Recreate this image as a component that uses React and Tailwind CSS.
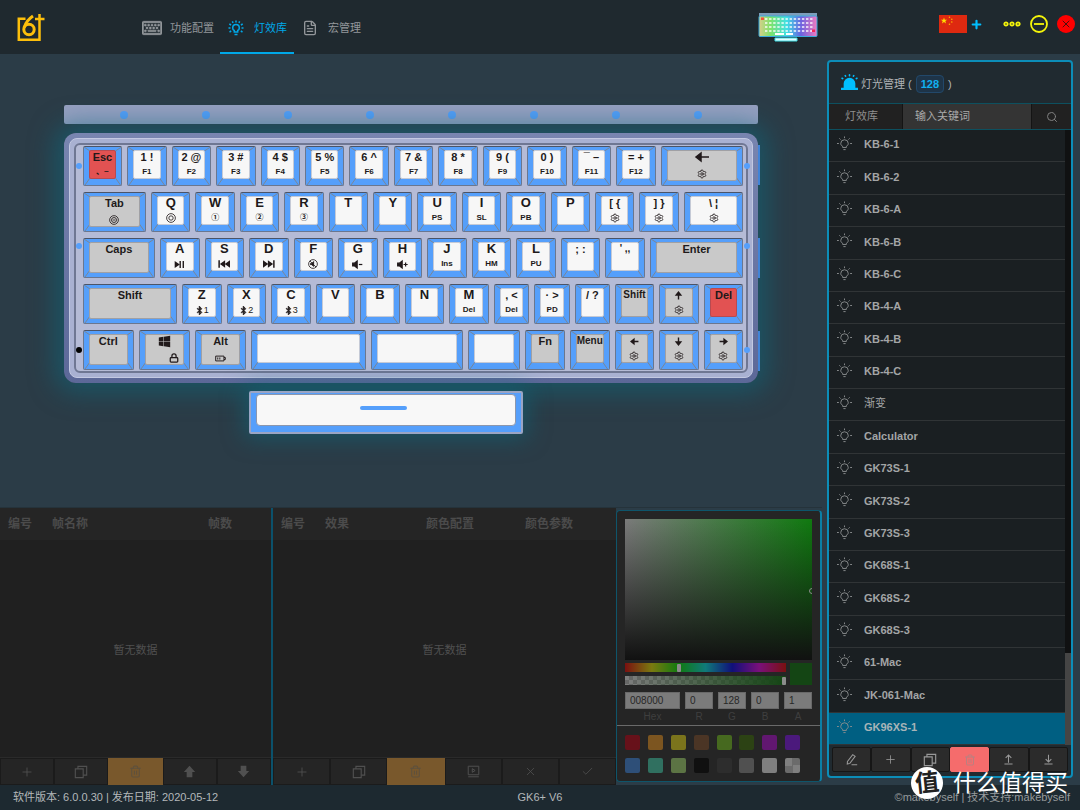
import React, { useState } from "react";
import clsx from "clsx";
import {
  Plus,
  Search,
  Trash2,
  X,
  Check,
  FileText,
  Settings,
  Lock,
} from "lucide-react";
import { FaBluetoothB, FaWindows, FaRegKeyboard } from "react-icons/fa";

/* ---------- icons ---------- */

const Svg = ({ size = 14, className, children, sw = 1.5 }) => (
  <svg
    width={size}
    height={size}
    viewBox="0 0 16 16"
    fill="none"
    stroke="currentColor"
    strokeWidth={sw}
    className={className}
    aria-hidden="true"
  >
    {children}
  </svg>
);

const Bulb = ({ size, sw = 1 }) => (
  <Svg size={size} sw={sw}>
    <path d="M6 12.2V11C4.6 10.2 4 9.2 4 8a4 4 0 0 1 8 0c0 1.200-.6 2.200-2 3v1.200zM6.800 14.500h2.400" />
    <path d="M8 .5v1.800M2.500 2.500l1.300 1.300M13.500 2.500l-1.300 1.300M0 8h2M14 8h2" />
  </Svg>
);

const BulbBright = () => (
  <Svg size={16} sw={1.5}>
    <path d="M6.300 12V10.500C5.200 9.900 4.700 9 4.700 7.900a3.300 3.300 0 0 1 6.600 0c0 1.100-.5 2-1.600 2.600V12zM6.500 14.500h3" />
    <path d="M8 .5v2M4.300 1.300l.8 1.600M11.700 1.300l-.8 1.600M1.300 4l1.800 1M14.700 4l-1.800 1M.5 8h2M13.500 8h2M1.500 12l1.700-1M14.500 12l-1.700-1" />
  </Svg>
);

const CopyIcon = () => (
  <Svg size={14} sw={1.3}>
    <path d="M1.500 4.500h9v10h-9z" />
    <path d="M4.500 4.500v-3h10v10h-4" />
  </Svg>
);

const PenIcon = () => (
  <Svg size={13} sw={1.3}>
    <path d="M3 10.500 9.500 2l3 2.200L6 12.800l-3.200.8zM8 14.500h7" />
  </Svg>
);

const UpIcon = () => (
  <Svg size={13} sw={1.3}>
    <path d="M8 12V2.500M4.500 6 8 2.500 11.500 6M3 13.500h10" />
  </Svg>
);

const DownIcon = () => (
  <Svg size={13} sw={1.3}>
    <path d="M8 2v9M4.500 7.500 8 11l3.500-3.500M3 13.500h10" />
  </Svg>
);

const PlayBox = () => (
  <Svg size={13} sw={1.2}>
    <path d="M1.500 1.500h13v10.500h-13zM1.500 14.500h13M6.500 4.500v4.500L10 6.800z" />
  </Svg>
);

const ThickArrow = ({ down }) => (
  <svg width="13" height="13" viewBox="0 0 16 16" className={clsx(down && "rotate-180")} aria-hidden="true">
    <path fill="currentColor" d="M8 1 15 8.500h-3.500V15h-7V8.500H1z" />
  </svg>
);

const Siren = () => (
  <svg width="17" height="17" viewBox="0 0 16 16" className="text-[#00bfff] -mt-1" aria-hidden="true">
    <path fill="currentColor" d="M2.500 13V9a5.500 5.500 0 0 1 11 0v4H16v2H0v-2z" />
    <path
      stroke="currentColor"
      strokeWidth="1.500"
      strokeLinecap="round"
      d="M8 .8v.8M4 1.500l.3.600M12 1.500l-.3.600M1 4l.6.400M15 4l-.6.400"
    />
  </svg>
);

const Logo = () => (
  <svg width="28" height="29" viewBox="0 0 28 29" fill="none" stroke="#fdbf0b" strokeWidth="2.500" aria-label="GK6+">
    <path d="M8.500 5.800H1.800v21H22.500V1M18 6h9.500" />
    <circle cx="12" cy="16.500" r="5.200" strokeWidth="3" />
    <path strokeWidth="3" d="M7.200 14.500C8.500 10 11.500 6 16 3" />
  </svg>
);

const Flag = () => (
  <svg width="28" height="18" viewBox="0 0 28 18" aria-label="中国">
    <path fill="#de2910" d="M0 0h28v18H0z" />
    <path fill="#ffde00" d="m5 2.500.8 2.200h2.400L6.300 6.100 7 8.400 5 7 3 8.400l.7-2.300-1.900-1.400h2.400z" />
    <g fill="#ffb000">
      <circle cx="10.500" cy="2.300" r=".8" />
      <circle cx="12.800" cy="4.200" r=".8" />
      <circle cx="12.800" cy="7" r=".8" />
      <circle cx="10.500" cy="9.300" r=".8" />
    </g>
  </svg>
);

const KeyboardThumb = () => (
  <svg width="60" height="31" viewBox="0 0 60 31" aria-label="GK6+ V6">
    <defs>
      <linearGradient id="rgb">
        <stop offset="0" stopColor="#d8cf8a" />
        <stop offset=".2" stopColor="#7de36a" />
        <stop offset=".48" stopColor="#3fe0e6" />
        <stop offset=".72" stopColor="#6a62e0" />
        <stop offset="1" stopColor="#f07ac0" />
      </linearGradient>
    </defs>
    <rect x="1" y="1" width="58" height="3" fill="#7c9dba" />
    <rect x="1" y="4" width="58" height="20.500" rx="1" fill="url(#rgb)" stroke="#3aa9dd" />
    {[6, 10, 14, 18].map((y) =>
      Array.from({ length: 12 }, (_, i) => (
        <rect key={`${y}-${i}`} x={7 + i * 4.1} y={y} width="2.400" height="2" fill="#fff" opacity=".7" />
      ))
    )}
    <rect x="3" y="5.500" width="3" height="2.500" fill="#f0503c" />
    <rect x="54" y="17.500" width="3" height="2.500" fill="#f0285a" />
    <path fill="#fff" d="M17 21h9v2h-9zM28 21h7v2h-7z" />
    <path fill="#e8fcff" stroke="#3fe0e6" d="M17 26h22v3H17z" />
  </svg>
);

const Gear = () => <Settings size={10} strokeWidth={2} />;

const Ring = ({ children }) => (
  <Svg size={10} sw={1.3}>
    <circle cx="8" cy="8" r="7" />
    {children}
  </Svg>
);

const Bt = ({ n }) => (
  <span className="flex items-center text-[9px] font-normal">
    <FaBluetoothB size={9} stroke="currentColor" strokeWidth={40} />
    {n}
  </span>
);

const Speaker = ({ plus }) => (
  <Svg size={11} sw={1.8}>
    <path fill="currentColor" d="M1 6h2.500L7.500 3v10L3.500 10H1z" />
    <path d={plus ? "M9.500 8h6M12.500 5v6" : "M10 8h5"} />
  </Svg>
);

const PlayPause = () => (
  <Svg size={11} sw={2}>
    <path fill="currentColor" stroke="none" d="M1 3v10l7.500-5z" />
    <path d="M9 3v10M13.500 3v10" />
  </Svg>
);

const Skip = ({ back }) => (
  <Svg size={12} sw={2} className={clsx(back && "rotate-180")}>
    <path fill="currentColor" stroke="none" d="M0 3v10l7-5zM6.500 3v10l7-5z" />
    <path d="M14.500 3v10" />
  </Svg>
);

/* ---------- data ---------- */

// w = relative width, c = cap colour (gray / red, white by default)
const k = (t, s, w = 39, c) => ({ t, s, w, c });

const ROWS = [
  [
    k("Esc", "、~", 39, "red"),
    k("1 !", "F1"),
    k("2 @", "F2"),
    k("3 #", "F3"),
    k("4 $", "F4"),
    k("5 %", "F5"),
    k("6 ^", "F6"),
    k("7 &", "F7"),
    k("8 *", "F8"),
    k("9 (", "F9"),
    k("0 )", "F10"),
    k("¯ –", "F11"),
    k("= +", "F12"),
    k("🡐", <Gear />, 84, "gray"),
  ],
  [
    k("Tab", <Ring><circle cx="8" cy="8" r="4" /><path d="M6 8h4" /></Ring>, 64, "gray"),
    k("Q", <Ring><circle cx="8" cy="8" r="3.500" /></Ring>),
    k("W", "①"),
    k("E", "②"),
    k("R", "③"),
    k("T"),
    k("Y"),
    k("U", "PS"),
    k("I", "SL"),
    k("O", "PB"),
    k("P"),
    k("[ {", <Gear />),
    k("] }", <Gear />),
    k("\\ ¦", <Gear />, 60),
  ],
  [
    k("Caps", null, 73, "gray"),
    k("A", <PlayPause />),
    k("S", <Skip back />),
    k("D", <Skip />),
    k("F", <Ring><path fill="currentColor" d="M4 7h2l3-3v8L6 9H4zM3 3l10 10" /></Ring>),
    k("G", <Speaker />),
    k("H", <Speaker plus />),
    k("J", "Ins"),
    k("K", "HM"),
    k("L", "PU"),
    k("; :"),
    k("' ,,"),
    k("Enter", null, 95, "gray"),
  ],
  [
    k("Shift", null, 96, "gray"),
    k("Z", <Bt n="1" />),
    k("X", <Bt n="2" />),
    k("C", <Bt n="3" />),
    k("V"),
    k("B"),
    k("N"),
    k("M", "Del"),
    k(", <", "Del", 35),
    k("· >", "PD", 35),
    k("/ ?", null, 34),
    k("Shift", null, 39, "gray"),
    k("🡑", <Gear />, 39, "gray"),
    k("Del", null, 39, "red"),
  ],
  [
    k("Ctrl", null, 51, "gray"),
    k("win", <Lock size={10} strokeWidth={3} className="ml-5" />, 51, "gray"),
    k("Alt", <Svg size={11} sw={1.4}><path d="M1 4.500h12v7H1zM13 6.500h2v3h-2M4 6.500v3M7 6.500v3" /></Svg>, 51, "gray"),
    k("", null, 117),
    k("", null, 94),
    k("", null, 52),
    k("Fn", null, 39, "gray"),
    k("Menu", null, 39, "gray"),
    k("🡐", <Gear />, 39, "gray"),
    k("🡓", <Gear />, 39, "gray"),
    k("🡒", <Gear />, 39, "gray"),
  ],
];

const ARROWS = {
  "🡐": "M15 8H3M7 4 2 8l5 4z",
  "🡒": "M1 8h12M9 4l5 4-5 4z",
  "🡑": "M8 15V3M4 7l4-5 4 5z",
  "🡓": "M8 1v12M4 9l4 5 4-5z",
};

const EFFECTS = [
  "KB-6-1",
  "KB-6-2",
  "KB-6-A",
  "KB-6-B",
  "KB-6-C",
  "KB-4-A",
  "KB-4-B",
  "KB-4-C",
  "渐变",
  "Calculator",
  "GK73S-1",
  "GK73S-2",
  "GK73S-3",
  "GK68S-1",
  "GK68S-2",
  "GK68S-3",
  "61-Mac",
  "JK-061-Mac",
  "GK96XS-1",
];

const PRESETS = [
  "bg-[#67111a]",
  "bg-[#7c5520]",
  "bg-[#7b741c]",
  "bg-[#4b3525]",
  "bg-[#46691f]",
  "bg-[#2c4214]",
  "bg-[#611770]",
  "bg-[#4b197c]",
  "bg-[#2e4f78]",
  "bg-[#307060]",
  "bg-[#5c7444]",
  "bg-[#101010]",
  "bg-[#2d2d2d]",
  "bg-[#505050]",
  "bg-[#7f7f7f]",
  "bg-[conic-gradient(#6b6b6b_25%,#7f7f7f_0_50%,#6b6b6b_0_75%,#7f7f7f_0)]",
];

/* ---------- keyboard ---------- */

// bevel edges running from the key corners to the cap
const Bevel = () => (
  <svg className="absolute inset-0 w-full h-full overflow-visible" stroke="#7b8696" strokeWidth="1" aria-hidden="true">
    <line x1="0" y1="0" x2="6" y2="4" />
    <line x1="1" y1="38" x2="6" y2="31" />
    <svg x="100%" overflow="visible">
      <line x1="0" y1="0" x2="-6" y2="4" />
      <line x1="-1" y1="38" x2="-6" y2="31" />
    </svg>
  </svg>
);

const Legend = ({ text, wide }) => {
  if (ARROWS[text]) {
    return (
      <Svg size={wide ? 16 : 9} sw={wide ? 1.5 : 2.5}>
        <path fill="currentColor" d={ARROWS[text]} />
      </Svg>
    );
  }
  if (text === "win") return <FaWindows size={13} />;
  return text;
};

const Key = ({ item }) => {
  const { t, s, w, c } = item;
  return (
    <button
      type="button"
      aria-label={t || "Space"}
      style={{ flex: `${w} 1 0px` }}
      className="relative min-w-0 h-10 rounded-xs bg-[#559ffb] border border-[#6a7790] border-t-[#4b5468]"
    >
      <Bevel />
      <span
        className={clsx(
          "absolute inset-x-[5px] top-[3px] rounded-xs border flex flex-col items-center justify-between text-[#20191a] font-bold whitespace-nowrap",
          c === "gray" && w > 39 ? "bottom-1" : "bottom-[6px]",
          c === "red" && "bg-[#e25252] border-[#b84a50]",
          c === "gray" && "bg-[#c9c9c9] border-[#a0a0a4]",
          !c && "bg-[#f7f7f7] border-[#c5cad6]"
        )}
      >
        <span
          className={clsx(
            "h-3 flex items-center leading-3",
            t.length === 1 ? "text-[13px]" : t.length > 3 && w < 40 ? "text-[10px]" : "text-[11px]"
          )}
        >
          <Legend text={t} wide={w > 60} />
        </span>
        <span className="h-3 flex items-center text-[8px] leading-3">{s}</span>
      </span>
    </button>
  );
};

const SideDots = ({ first }) => (
  <div className={clsx("flex flex-col justify-between w-[6px] py-[17px]", !first && "-mr-1")}>
    <i className="size-[6px] rounded-full bg-[#559ffb]" />
    <i className="size-[6px] rounded-full bg-[#559ffb] -mt-6" />
    <i className={clsx("size-[6px] rounded-full", first ? "bg-black" : "bg-[#559ffb]")} />
  </div>
);

const KeyboardView = () => (
  <section className="flex-1 flex flex-col items-center pt-[51px]">
    <div className="w-[84.5%] flex flex-col">
      <div className="h-[19px] rounded-xs bg-[#97a0c1] flex items-center justify-between px-14">
        {Array.from({ length: 8 }, (_, i) => (
          <i key={i} className="size-2 rounded-full bg-[#559ffb]" />
        ))}
      </div>

      <div className="relative mt-[9px] rounded-xl bg-linear-to-b from-[#7885b0] to-[#5c6898] p-[5px] shadow-[0_0_24px_10px_rgba(14,104,124,0.55)]">
        <div className="absolute -right-[2px] inset-y-3 w-[2px] flex flex-col justify-between">
          <i className="h-10 bg-[#4184d8]" />
          <i className="h-10 bg-[#4184d8]" />
          <i className="h-10 bg-[#4184d8]" />
        </div>
        <div className="rounded-lg bg-[#a9b1d2] border border-[#c3c9e2] p-1">
          <div className="rounded-md bg-[#b5bbd6] border-2 border-[#6f7793] flex py-px gap-px">
            <SideDots first />
            <div className="flex-1 min-w-0 flex flex-col gap-[6px]">
              {ROWS.map((row, i) => (
                <div key={i} className="flex gap-[5px]">
                  {row.map((item, j) => (
                    <Key key={j} item={item} />
                  ))}
                </div>
              ))}
            </div>
            <SideDots />
          </div>
        </div>
      </div>

      <button
        type="button"
        aria-label="Space"
        className="relative mt-2 ml-[26.7%] w-[39.4%] h-[43px] rounded-xs bg-[#559ffb] border-2 border-[#9aa5c4] shadow-[0_0_22px_4px_rgba(14,104,124,0.6)]"
      >
        <span className="absolute left-[5px] right-[5px] top-px bottom-[6px] rounded-sm bg-[#f8f8f8] border border-[#8c97ad] flex justify-center pt-[11px]">
          <i className="w-[47px] h-1 rounded-full bg-[#559ffb] -ml-1" />
        </span>
      </button>
    </div>
  </section>
);

/* ---------- lower panels ---------- */

const ToolButton = ({ label, gold, children }) => (
  <button
    type="button"
    aria-label={label}
    className={clsx(
      "flex-1 flex items-center justify-center border",
      gold ? "bg-[#79582c] border-[#79582c] text-[#5f513d]" : "bg-[#252525] border-[#1b1b1b] text-[#505050]"
    )}
  >
    {children}
  </button>
);

const DataPanel = ({ cols, tools, className }) => (
  <div className={clsx("flex flex-col bg-[#202020] min-w-0", className)}>
    <table className="w-full table-fixed text-xs text-[#4b4b4b]">
      <thead>
        <tr className="h-8 bg-[#252525]">
          {cols.map(([name, w]) => (
            <th key={name} className={clsx("text-left font-bold pl-2", w)}>
              {name}
            </th>
          ))}
        </tr>
      </thead>
    </table>
    <div className="flex-1 flex items-center justify-center pt-1 text-[11px] text-[#505050]">暂无数据</div>
    <div className="h-7 flex border-t border-[#2a2a2a]">{tools}</div>
  </div>
);

const Channel = ({ label, value, w }) => (
  <label className={clsx("flex flex-col items-center text-[10px] leading-4 text-[#3f3f3f]", w)}>
    <input
      defaultValue={value}
      className="w-full h-[17px] px-1 bg-[#7b7b7b] border border-[#696969] text-[10px] text-[#272727]"
    />
    {label}
  </label>
);

const range =
  "block w-full h-[9px] appearance-none [&::-webkit-slider-thumb]:appearance-none [&::-webkit-slider-thumb]:w-1 [&::-webkit-slider-thumb]:h-2 [&::-webkit-slider-thumb]:bg-[#8c8c8c] [&::-webkit-slider-thumb]:rounded-[1px]";

const ColorPanel = () => (
  <div className="w-[206px] mt-[2px] mb-[3px] flex flex-col bg-[#252525] border border-[#0e556b] border-r-2 border-r-[#0b7fa6] rounded-sm">
    <div className="p-2 pb-0">
      <div className="relative h-[141px] overflow-hidden bg-[linear-gradient(to_top,#111,transparent),linear-gradient(to_right,#7b7b7b,#107a10)]">
        <i className="absolute -right-[3px] top-[69px] size-[6px] rounded-full border border-[#8c8c8c]" />
      </div>
      <div className="mt-[3px] flex gap-1">
        <div className="flex-1 flex flex-col gap-1">
          <input
            type="range"
            aria-label="Hue"
            max="360"
            defaultValue="120"
            className={clsx(range, "bg-[linear-gradient(to_right,#7a1010,#7a7a10,#107a10,#107a7a,#10107a,#7a107a,#7a1010)]")}
          />
          <input
            type="range"
            aria-label="Alpha"
            max="100"
            defaultValue="100"
            className={clsx(
              range,
              "bg-[linear-gradient(to_right,transparent,#144514),conic-gradient(#686868_25%,#7e7e7e_0_50%,#686868_0_75%,#7e7e7e_0)] bg-[size:100%_100%,8px_8px]"
            )}
          />
        </div>
        <div className="w-[22px] bg-[#144514]" />
      </div>
      <div className="mt-[7px] flex gap-[5px]">
        <Channel label="Hex" value="008000" w="w-[55px]" />
        <Channel label="R" value="0" w="flex-1" />
        <Channel label="G" value="128" w="flex-1" />
        <Channel label="B" value="0" w="flex-1" />
        <Channel label="A" value="1" w="flex-1" />
      </div>
    </div>
    <div className="border-t border-[#6a6a6a]" />
    <div className="grid grid-cols-8 gap-y-2 pl-2 pr-3 pt-[9px]">
      {PRESETS.map((bg) => (
        <button key={bg} type="button" aria-label="Preset colour" className={clsx("size-[15px] rounded-xs", bg)} />
      ))}
    </div>
  </div>
);

/* ---------- effects sidebar ---------- */

const SideTool = ({ label, danger, children }) => (
  <button
    type="button"
    aria-label={label}
    className={clsx(
      "flex-1 flex items-center justify-center rounded-xs border",
      danger ? "bg-[#f56c6c] border-[#f56c6c] text-[#b98080]" : "bg-[#2b2b2b] border-[#161616] text-[#999]"
    )}
  >
    {children}
  </button>
);

const Sidebar = () => {
  const [active, setActive] = useState("GK96XS-1");

  return (
    <aside className="w-[246px] mt-[6px] mb-[7px] mr-[7px] ml-[5px] flex flex-col border-2 border-[#0c8db8] rounded-sm bg-[#202a30]">
      <h2 className="h-[42px] pl-3 pt-[3px] flex items-center text-[11px] text-[#b0b4b6] border-b border-[#0d505f]">
        <Siren />
        <span className="ml-[3px]">灯光管理 (</span>
        <span className="mx-1 px-1 h-[18px] flex items-center rounded-sm border border-[#22486a] bg-[#1e3448] text-[#10b0f0] font-bold">
          128
        </span>
        )
      </h2>

      <div className="h-[26px] flex text-[11px] text-[#9a9a9a] border-b border-[#0d505f]">
        <label htmlFor="keyword" className="w-[74px] pr-2 flex items-center justify-center bg-[#212121] text-[#8e8e8e] border-r border-[#141414]">
          灯效库
        </label>
        <input
          id="keyword"
          placeholder="输入关键词"
          className="flex-1 min-w-0 px-3 bg-[#343434] placeholder:text-[#aaa]"
        />
        <button type="button" aria-label="搜索" className="w-10 flex items-center justify-center bg-[#212121] border-l border-[#141414]">
          <Search size={12} strokeWidth={2} className="text-[#808080]" />
        </button>
      </div>

      <div className="flex-1 flex">
        <ul className="flex-1 flex flex-col">
          {EFFECTS.map((name) => (
            <li key={name} className="flex-1 flex border-b border-[#303436]">
              <button
                type="button"
                onClick={() => setActive(name)}
                className={clsx(
                  "flex-1 flex items-center gap-3 pl-2 pb-[2px] text-[11px]",
                  name === "渐变" ? "font-normal" : "font-bold",
                  name === active ? "bg-[#005f82] text-[#a8b4b8]" : "bg-[#1a1f22] text-[#a3a5a6]"
                )}
              >
                <span className="text-[#8b8e8f] -mt-[2px]">
                  <Bulb size={15} />
                </span>
                {name}
              </button>
            </li>
          ))}
        </ul>
        <div className="w-[6px] flex flex-col justify-end bg-[#101112]">
          <div className="h-[15%] bg-[#454545]" />
        </div>
      </div>

      <div className="h-[31px] p-[2px] pb-1 px-[3px] flex">
        <SideTool label="编辑">
          <PenIcon />
        </SideTool>
        <SideTool label="新增">
          <Plus size={13} strokeWidth={1.5} />
        </SideTool>
        <SideTool label="复制">
          <CopyIcon />
        </SideTool>
        <SideTool label="删除" danger>
          <Trash2 size={12} />
        </SideTool>
        <SideTool label="导出">
          <UpIcon />
        </SideTool>
        <SideTool label="导入">
          <DownIcon />
        </SideTool>
      </div>
    </aside>
  );
};

/* ---------- header & footer ---------- */

const Header = () => (
  <header className="h-[54px] flex items-center bg-[#1f292f] text-[11px] text-[#93979b]">
    <div className="w-[142px] pl-[17px]">
      <Logo />
    </div>
    <nav className="self-stretch flex">
      <button type="button" className="flex items-center gap-2 pr-[6px] pt-[2px]">
        <FaRegKeyboard size={20} strokeWidth={20} stroke="currentColor" />
        功能配置
      </button>
      <button type="button" className="flex items-center gap-[10px] pl-2 pr-[7px] text-[#00a8e8] border-b-2 border-[#00a8e8] pt-1">
        <BulbBright />
        灯效库
      </button>
      <button type="button" className="flex items-center gap-[10px] pl-2 pt-[2px]">
        <FileText size={16} strokeWidth={2} />
        宏管理
      </button>
    </nav>
    <div className="ml-auto">
      <KeyboardThumb />
    </div>
    <div className="w-[262px] pl-[121px] pr-[5px] pb-[6px] flex items-center">
      <Flag />
      <button type="button" aria-label="语言" className="ml-[3px] text-[#00bfff]">
        <Plus size={13} strokeWidth={4} />
      </button>
      <div className="ml-auto flex items-center gap-[9px]">
        <button type="button" aria-label="更多">
          <svg width="18" height="6" fill="none" stroke="#f5f50a" strokeWidth="1.800">
            <circle cx="3" cy="3" r="1.700" />
            <circle cx="9" cy="3" r="1.700" />
            <circle cx="15" cy="3" r="1.700" />
          </svg>
        </button>
        <button type="button" aria-label="最小化">
          <svg width="18" height="18" fill="none" stroke="#f5f50a" strokeWidth="1.800">
            <circle cx="9" cy="9" r="8" />
            <path d="M4 9h10" />
          </svg>
        </button>
        <button type="button" aria-label="关闭" className="size-[18px] rounded-full bg-[#fe0000] text-[#4a1010] flex items-center justify-center">
          <X size={12} strokeWidth={2} />
        </button>
      </div>
    </div>
  </header>
);

const Footer = () => (
  <footer className="h-[25px] px-[10px] grid grid-cols-[1fr_auto_1fr] items-center bg-[#1d2930] text-[11px] text-[#b4b8ba]">
    <span className="pl-[3px]">软件版本: 6.0.0.30 | 发布日期: 2020-05-12</span>
    <span>GK6+ V6</span>
    <span className="text-right whitespace-nowrap text-[#969a9c]">©makebyself | 技术支持:makebyself</span>
  </footer>
);

const Watermark = () => (
  <div className="absolute right-3 bottom-[11px] flex items-center gap-[10px] text-white text-[23px] leading-8 pointer-events-none">
    <span className="size-8 rounded-full bg-white text-[#222] flex items-center justify-center text-2xl font-bold">
      <span className="-rotate-6">值</span>
    </span>
    什么值得买
  </div>
);

const App = () => {
  return (
    <div className="relative min-h-screen flex flex-col bg-[#2b3c47] font-['Liberation_Sans','Noto_Sans_CJK_SC',sans-serif]">
      <Header />
      <main className="flex-1 flex">
        <div className="flex-1 min-w-0 flex flex-col">
          <KeyboardView />
          <div className="h-[278px] flex border-t border-[#25333b]">
            <DataPanel
              className="w-[273px] border-r-2 border-[#0b516b]"
              cols={[
                ["编号", "w-11"],
                ["帧名称", ""],
                ["帧数", "w-[71px]"],
              ]}
              tools={
                <>
                  <ToolButton label="新增"><Plus size={14} strokeWidth={1.5} /></ToolButton>
                  <ToolButton label="复制"><CopyIcon /></ToolButton>
                  <ToolButton label="删除" gold><Trash2 size={13} /></ToolButton>
                  <ToolButton label="上移"><ThickArrow /></ToolButton>
                  <ToolButton label="下移"><ThickArrow down /></ToolButton>
                </>
              }
            />
            <DataPanel
              className="flex-1"
              cols={[
                ["编号", "w-11"],
                ["效果", ""],
                ["颜色配置", "w-[99px]"],
                ["颜色参数", "w-[99px]"],
              ]}
              tools={
                <>
                  <ToolButton label="新增"><Plus size={14} strokeWidth={1.5} /></ToolButton>
                  <ToolButton label="复制"><CopyIcon /></ToolButton>
                  <ToolButton label="删除" gold><Trash2 size={13} /></ToolButton>
                  <ToolButton label="播放"><PlayBox /></ToolButton>
                  <ToolButton label="取消"><X size={13} strokeWidth={1.5} /></ToolButton>
                  <ToolButton label="确定"><Check size={13} strokeWidth={1.5} /></ToolButton>
                </>
              }
            />
            <ColorPanel />
          </div>
        </div>
        <Sidebar />
      </main>
      <Footer />
      <Watermark />
    </div>
  );
};

export default App;
